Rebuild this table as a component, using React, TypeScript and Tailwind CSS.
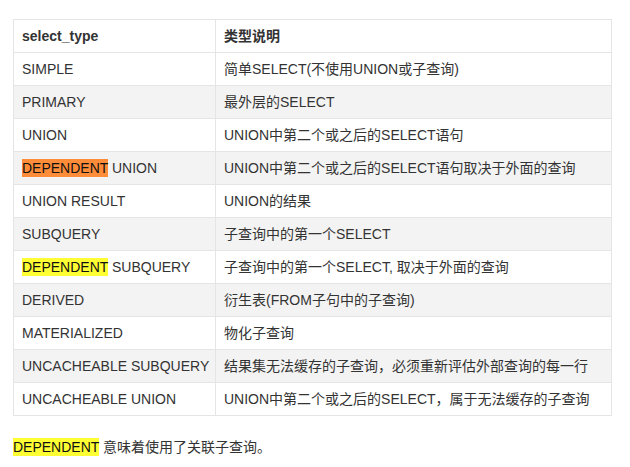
import React from 'react';

type Row = { type: React.ReactNode; desc: string };

const Mark: React.FC<{ color: 'orange' | 'yellow'; children: React.ReactNode }> = ({ color, children }) => (
  <span className={`${color === 'orange' ? 'bg-[#ff8c38]' : 'bg-[#ffff33]'} text-[#111] py-px`}>{children}</span>
);

const rows: Row[] = [
  { type: 'SIMPLE', desc: '简单SELECT(不使用UNION或子查询)' },
  { type: 'PRIMARY', desc: '最外层的SELECT' },
  { type: 'UNION', desc: 'UNION中第二个或之后的SELECT语句' },
  { type: <><Mark color="orange">DEPENDENT</Mark> UNION</>, desc: 'UNION中第二个或之后的SELECT语句取决于外面的查询' },
  { type: 'UNION RESULT', desc: 'UNION的结果' },
  { type: 'SUBQUERY', desc: '子查询中的第一个SELECT' },
  { type: <><Mark color="yellow">DEPENDENT</Mark> SUBQUERY</>, desc: '子查询中的第一个SELECT, 取决于外面的查询' },
  { type: 'DERIVED', desc: '衍生表(FROM子句中的子查询)' },
  { type: 'MATERIALIZED', desc: '物化子查询' },
  { type: 'UNCACHEABLE SUBQUERY', desc: '结果集无法缓存的子查询，必须重新评估外部查询的每一行' },
  { type: 'UNCACHEABLE UNION', desc: 'UNION中第二个或之后的SELECT，属于无法缓存的子查询' },
];

const App: React.FC = () => {
  return (
    <div className="bg-white min-h-[467px] pl-[13px] pt-[19px] text-[14px] text-[#333] font-['Liberation_Sans','Noto_Sans_CJK_SC',sans-serif]">
      <table className="border-collapse table-fixed w-[599px]">
        <colgroup>
          <col className="w-[202px]" />
          <col />
        </colgroup>
        <thead>
          <tr className="h-[33px]">
            <th className="border border-[#e5e5e5] px-2 text-left font-bold">select_type</th>
            <th className="border border-[#e5e5e5] px-2 text-left font-bold">类型说明</th>
          </tr>
        </thead>
        <tbody>
          {rows.map((row, i) => (
            <tr key={i} className={`h-[33px] ${i % 2 === 1 ? 'bg-[#f3f3f3]' : 'bg-white'}`}>
              <td className="border border-[#e5e5e5] px-2 whitespace-nowrap">{row.type}</td>
              <td className="border border-[#e5e5e5] px-2 whitespace-nowrap">{row.desc}</td>
            </tr>
          ))}
        </tbody>
      </table>
      <p className="mt-[21px] leading-[21px]">
        <Mark color="yellow">DEPENDENT</Mark> 意味着使用了关联子查询。
      </p>
    </div>
  );
};

export default App;
